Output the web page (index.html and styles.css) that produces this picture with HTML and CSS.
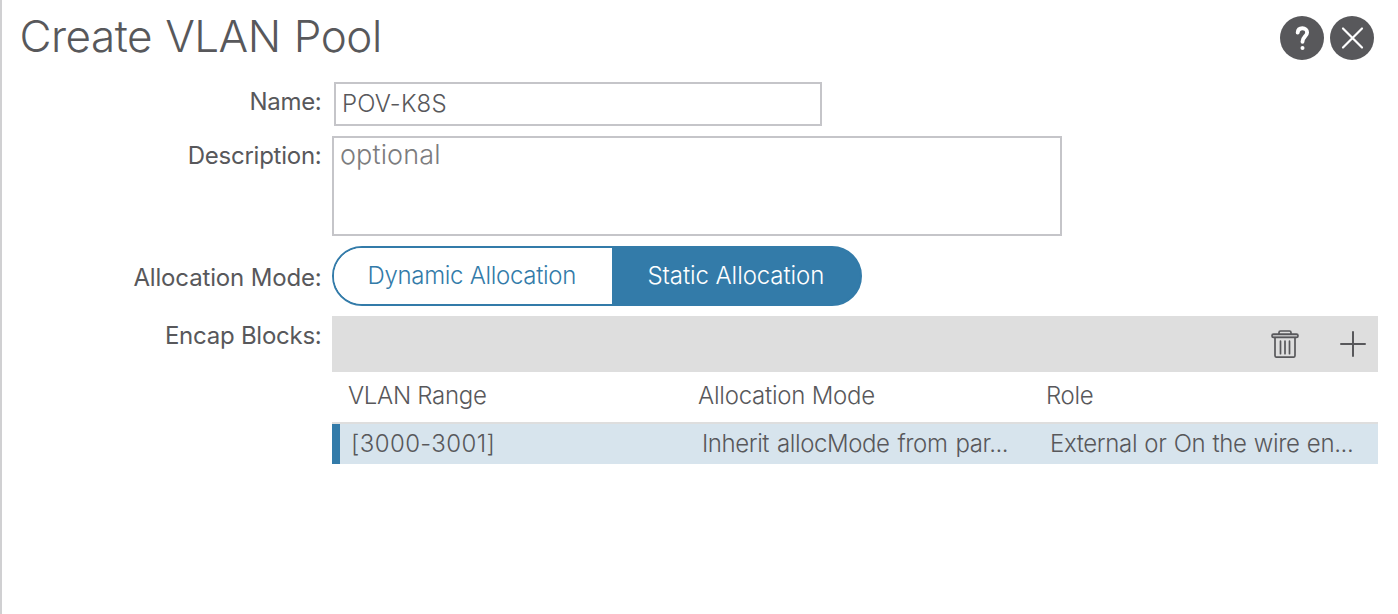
FILE: index.html
```
<!DOCTYPE html>
<html lang="en">
<head>
<meta charset="utf-8">
<title>Create VLAN Pool</title>
<link rel="stylesheet" href="styles.css">
</head>
<body>
<main class="dialog">
  <header class="header">
    <h1 class="title">Create VLAN Pool</h1>
    <div class="actions">
      <svg class="round" viewBox="0 0 44 44"><circle cx="22" cy="22" r="22" fill="#58585b"/><path d="M17.700 16.600c.2-2.900 2.200-4.400 4.700-4.400 2.700 0 4.700 1.700 4.700 4.200 0 3.900-4.600 4.300-4.600 9.400" fill="none" stroke="#fff" stroke-width="3.900" stroke-linecap="round"/><circle cx="22.500" cy="32.100" r="2" fill="#fff"/></svg>
      <svg class="round" viewBox="0 0 44 44"><circle cx="22" cy="22" r="22" fill="#58585b"/><path d="M13 12.500l19 19M32 12.500l-19 19" stroke="#fff" stroke-width="2.200" stroke-linecap="round"/></svg>
    </div>
  </header>
  <div class="row row-name">
    <label class="label"><span class="t-name">Name:</span></label>
    <div class="input"><span class="t-pov">POV-K8S</span></div>
  </div>
  <div class="row row-desc">
    <label class="label"><span class="t-desc">Description:</span></label>
    <div class="textarea"><span class="t-opt">optional</span></div>
  </div>
  <div class="row row-mode">
    <label class="label"><span class="t-mode">Allocation Mode:</span></label>
    <div class="toggle">
      <div class="option"><span class="t-dyn">Dynamic Allocation</span></div>
      <div class="option selected"><span class="t-stat">Static Allocation</span></div>
    </div>
  </div>
  <div class="row row-blocks">
    <label class="label"><span class="t-encap">Encap Blocks:</span></label>
    <section class="table">
      <div class="toolbar">
        <svg class="trash" viewBox="0 0 28 28" fill="none" stroke="#58585b" stroke-width="1.700" stroke-linejoin="round" stroke-linecap="round"><path d="M8 4V2.500Q8 1 9.500 1h9Q20 1 20 2.500V4"/><rect x="1" y="4.200" width="26" height="3.200" rx="1.500" fill="#bdbdbe"/><path d="M4 8v17.500q0 1.700 1.700 1.700h16.600q1.700 0 1.700-1.700V8M9.500 11.200v12.500M14 11.200v12.500M18.500 11.200v12.500"/></svg>
        <svg class="plus" viewBox="0 0 26 26"><path d="M1 13h24M13 1v24" stroke="#58585b" stroke-width="2" stroke-linecap="round"/></svg>
      </div>
      <div class="cells head"><span class="t-range">VLAN Range</span><span class="t-hmode">Allocation Mode</span><span class="t-role">Role</span></div>
      <div class="cells record"><span class="t-vlan">[3000-3001]</span><span class="t-inh">Inherit allocMode from par...</span><span class="t-ext">External or On the wire en...</span></div>
    </section>
  </div>
</main>
</body>
</html>
```
FILE: styles.css
```
* { box-sizing: border-box; }
body {
  margin: 0;
  background: #fff;
  color: #58585b;
  font: 300 24px/24px Inter, "Liberation Sans", sans-serif;
  overflow: hidden;
}
.dialog { height: 100vh; padding-right: 20px; border-left: 2px solid #d0d0d2; white-space: nowrap; }
.header { height: 82px; display: flex; justify-content: space-between; padding: 14px 4px 0 17.500px; }
.title { margin: 0; font-size: 44px; line-height: 44px; font-weight: 300; letter-spacing: -.5px; word-spacing: 1.300px; }
.actions { display: flex; gap: 6px; padding-top: 2px; }
.round { display: block; width: 44px; height: 44px; }
.row { display: grid; grid-template-columns: 320px 1fr; column-gap: 10px; align-items: start; }
.label { text-align: right; font-weight: 400; padding-top: 8px; }
.row-name { height: 54px; }
.input { width: 488px; height: 44px; margin-left: 2px; padding: 8px 6px; border: 2px solid #c5c5c9; }
.row-desc { height: 110px; }
.textarea { width: 730px; height: 100px; padding: 5px 6px; border: 2px solid #c5c5c9; color: #7c7c7e; font-size: 27px; }
.row-mode { height: 70px; }
.row-mode .label { padding-top: 20px; }
.toggle { width: 530px; height: 60px; display: flex; border: 2px solid #337ba9; border-radius: 30px; overflow: hidden; background: linear-gradient(90deg, #fff 50%, #337ba9 50%) border-box; color: #337ba9; }
.option { width: 278px; padding: 16px 0 0 33.500px; background: #fff; }
.selected { flex: 1; padding-left: 35.500px; background: #337ba9; color: #fff; }
.toolbar { height: 56px; background: #dedede; display: flex; justify-content: flex-end; gap: 41px; padding: 14px 12.500px 0 0; }
.trash { width: 28px; height: 28px; }
.plus { width: 26px; height: 26px; margin-top: 1px; }
.cells { display: grid; grid-template-columns: 350px 348px 1fr; }
.head { height: 50px; padding: 12px 0 0 16px; }
.record { height: 42px; padding: 8px 0 0 20px; border-top: 2px solid #dedede; background: linear-gradient(90deg, #337ba9 8px, #d7e4ed 8px); }
.t-name { letter-spacing: -.3px; margin-right: .5px; }
.t-desc, .t-encap { letter-spacing: -.25px; margin-right: .5px; }
.t-mode { letter-spacing: -.16px; margin-right: .5px; }
.t-pov { letter-spacing: .15px; }
.t-opt { letter-spacing: .12px; }
.t-dyn { letter-spacing: -.31px; }
.t-stat { letter-spacing: -.08px; }
.t-range { letter-spacing: -.3px; }
.t-hmode { letter-spacing: -.24px; }
.t-role { letter-spacing: -.3px; }
.t-vlan { letter-spacing: .4px; margin-left: -1px; }
.t-inh { letter-spacing: -.43px; word-spacing: 1.700px; }
.t-ext { letter-spacing: -.36px; word-spacing: .8px; }
```
